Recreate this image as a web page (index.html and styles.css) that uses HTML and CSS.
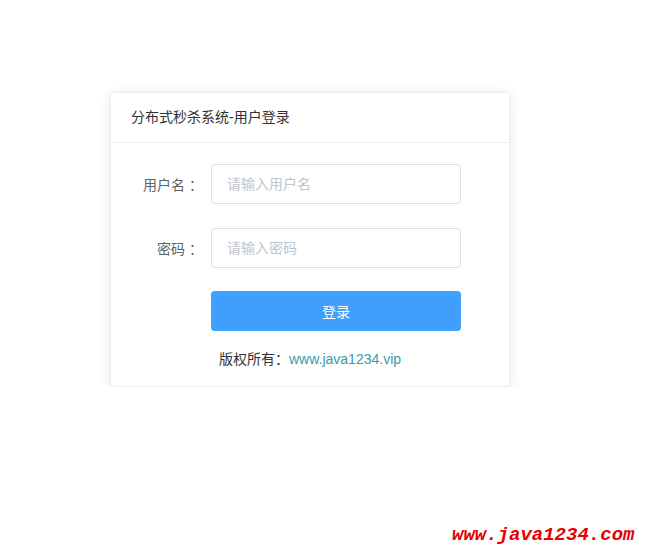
FILE: index.html
```html
<!DOCTYPE html>
<html lang="zh-CN">
<head>
    <meta charset="UTF-8">
    <title>分布式秒杀系统-用户登录</title>
    <link rel="stylesheet" href="styles.css">
</head>
<body>
    <div class="login-card">
        <div class="card-header">分布式秒杀系统-用户登录</div>
        <div class="card-body">
            <form class="login-form">
                <div class="form-item">
                    <label class="form-label">用户名<span class="colon">：</span></label>
                    <input class="form-input" type="text" placeholder="请输入用户名">
                </div>
                <div class="form-item">
                    <label class="form-label">密码<span class="colon">：</span></label>
                    <input class="form-input" type="password" placeholder="请输入密码">
                </div>
                <div class="form-item btn-item">
                    <span class="form-label"></span>
                    <button class="login-btn" type="button">登录</button>
                </div>
            </form>
            <p class="copyright">版权所有：<a href="#">www.java1234.vip</a></p>
        </div>
    </div>
    <div class="watermark">www.java1234.com</div>
</body>
</html>
```

FILE: styles.css
```css
body {
    margin: 0;
    padding: 92px 0 0 110px;
    background-color: #fff;
    font-family: "Liberation Sans", "Noto Sans CJK SC", sans-serif;
    font-size: 14px;
    color: #606266;
}
.login-card {
    width: 398px;
    border: 1px solid #ebeef5;
    border-radius: 4px;
    background-color: #fff;
    box-shadow: 0 2px 12px 0 rgba(0,0,0,0.1);
}
.card-header {
    padding: 17px 20px 18px;
    line-height: 14px;
    border-bottom: 1px solid #ebeef5;
    color: #303133;
}
.card-body {
    padding: 21px 20px 17px;
}
.login-form {
    margin: 0;
}
.form-item {
    display: flex;
    align-items: center;
    margin-bottom: 24px;
}
.btn-item {
    margin-top: -1px;
}
.form-label {
    width: 80px;
    box-sizing: border-box;
    padding-right: 12px;
    text-align: right;
    color: #606266;
    flex-shrink: 0;
}
.colon {
    display: inline-block;
    width: 14px;
    text-indent: 4px;
}
.form-input {
    width: 250px;
    height: 40px;
    box-sizing: border-box;
    padding: 0 15px;
    border: 1px solid #dcdfe6;
    border-radius: 4px;
    font-family: inherit;
    font-size: 14px;
    color: #606266;
    outline: none;
}
.form-input::placeholder {
    color: #c0c4cc;
}
.login-btn {
    width: 250px;
    height: 40px;
    border: none;
    border-radius: 4px;
    background-color: #409eff;
    color: #fff;
    font-family: inherit;
    font-size: 14px;
    cursor: pointer;
}
.copyright {
    margin: -6px 0 0;
    text-align: center;
    color: #303133;
    line-height: 20px;
}
.copyright a {
    color: #3a9ba8;
    text-decoration: none;
}
.watermark {
    position: absolute;
    left: 452px;
    top: 524px;
    font-family: "Liberation Mono", monospace;
    font-size: 19px;
    font-weight: bold;
    font-style: italic;
    color: #e60000;
}
```
